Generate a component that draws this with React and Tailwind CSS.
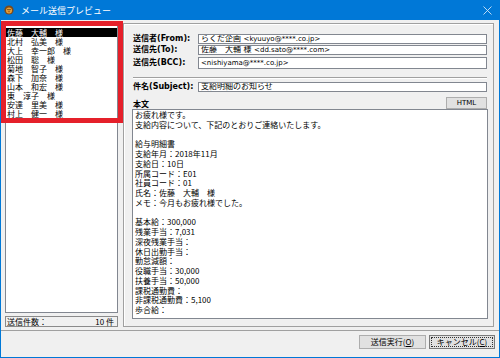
import React from "react";

const names = [
  "佐藤　大輔　様",
  "北村　弘美　様",
  "大上　幸一郎　様",
  "松田　聡　様",
  "菊地　智子　様",
  "森下　加奈　様",
  "山本　和宏　様",
  "東　淳子　様",
  "安達　里美　様",
  "村上　健一　様",
];

const body = [
  "お疲れ様です。",
  "支給内容について、下記のとおりご連絡いたします。",
  "",
  "給与明細書",
  "支給年月：2018年11月",
  "支給日：10日",
  "所属コード：E01",
  "社員コード：01",
  "氏名：佐藤　大輔　様",
  "メモ：今月もお疲れ様でした。",
  "",
  "基本給：300,000",
  "残業手当：7,031",
  "深夜残業手当：",
  "休日出勤手当：",
  "勤怠減額：",
  "役職手当：30,000",
  "扶養手当：50,000",
  "課税通勤費：",
  "非課税通勤費：5,100",
  "歩合給：",
];

function Field({ label, children, h, mt }) {
  return (
    <div className={`flex items-center ${h} ${mt}`}>
      <div className="w-[65px] shrink-0 text-[8px] font-bold leading-none whitespace-nowrap font-['DejaVu_Sans','Noto_Sans_CJK_JP',sans-serif]">
        {label}
      </div>
      <div className="flex-1 h-full border border-[#828790] bg-white flex items-center px-[2px] text-[8px] leading-none whitespace-nowrap overflow-hidden font-['DejaVu_Sans','Noto_Sans_CJK_JP',sans-serif]">
        {children}
      </div>
    </div>
  );
}

export default function App() {
  return (
    <div className="relative w-[500px] h-[358px] flex flex-col bg-[#0078d7] font-['Noto_Sans_CJK_JP',sans-serif] text-black">
      {/* title bar */}
      <div className="h-[20px] flex items-center text-white shrink-0">
        <svg className="ml-[4px]" width="10" height="10" viewBox="0 0 10 10">
          <circle cx="5" cy="5" r="4.6" fill="#7a4a1c" />
          <circle cx="5" cy="5.4" r="3" fill="#e8a23a" />
          <circle cx="4" cy="4.6" r="0.7" fill="#3a2008" />
          <circle cx="6" cy="4.6" r="0.7" fill="#3a2008" />
          <ellipse cx="5" cy="6.6" rx="1.3" ry="0.8" fill="#b86a20" />
        </svg>
        <span className="ml-[7px] text-[9px] leading-none">メール送信プレビュー</span>
        <svg className="ml-auto mr-[8px]" width="9" height="9" viewBox="0 0 9 9">
          <path d="M0.5 0.5 L8.5 8.5 M8.5 0.5 L0.5 8.5" stroke="#cfe4f7" strokeWidth="0.9" />
        </svg>
      </div>

      {/* body */}
      <div className="flex-1 mx-px mb-px bg-[#f0f0f0] flex flex-col">
        <div className="flex h-[310px] shrink-0">
          {/* left column */}
          <div className="w-[122px] shrink-0 pl-[4px] pt-[5px] flex flex-col">
            <div className="w-[113px] h-[288px] border border-[#828790] bg-white pt-[2px] px-0">
              {names.map((n, i) => (
                <div
                  key={i}
                  className={`h-[9px] leading-[9px] text-[8px] pl-[1px] whitespace-nowrap ${
                    i === 0 ? "bg-black text-white" : ""
                  }`}
                >
                  {n}
                </div>
              ))}
            </div>
            <div className="mt-[3px] w-[113px] h-[11px] border border-[#8a8a8a] bg-[#f0f0f0] flex items-center justify-between pl-[1px] pr-[3px] text-[8px] leading-none">
              <span>送信件数：</span>
              <span>10&nbsp;件</span>
            </div>
          </div>

          {/* right frame */}
          <div className="mt-[3px] w-[371px] h-[304px] border border-[#a0a0a0] shadow-[inset_1px_1px_0_#ffffff] flex flex-col pl-[9px] pr-[6px] pt-[10px]">
            <Field label="送信者(From):" h="h-[10px]" mt="">
              らくだ企画&nbsp;<span className="text-[7px]">&lt;kyuuyo@****.co.jp&gt;</span>
            </Field>
            <Field label="送信先(To):" h="h-[10px]" mt="mt-[1px]">
              佐藤　大輔 様&nbsp;<span className="text-[7px]">&lt;dd.sato@****.com&gt;</span>
            </Field>
            <Field label="送信先(BCC):" h="h-[12px]" mt="mt-[2px]">
              <span className="text-[7px]">&lt;nishiyama@****.co.jp&gt;</span>
            </Field>
            <div className="mt-[8px] h-[2px] border-t border-[#a0a0a0] border-b border-b-white" />
            <Field label="件名(Subject):" h="h-[10px]" mt="mt-[3px]">
              支給明細のお知らせ
            </Field>
            <div className="mt-[5px] h-[12px] flex items-end">
              <span className="text-[8px] font-bold leading-none pb-[1px]">本文</span>
              <div className="ml-auto w-[41px] h-[12px] border border-[#adadad] bg-[#e1e1e1] flex items-center justify-center text-[7px] leading-none font-['DejaVu_Sans',sans-serif]">
                HTML
              </div>
            </div>
            <div className="ml-[-1px] mr-[-1px] h-[210px] border border-[#828790] bg-white pl-[2px] pt-0 text-[8px] leading-[9.75px] overflow-hidden">
              {body.map((l, i) => (
                <div key={i} className="h-[9.75px] whitespace-nowrap">
                  {l}
                </div>
              ))}
            </div>
          </div>
        </div>

        <div className="h-px bg-[#a0a0a0] shrink-0" />

        {/* buttons */}
        <div className="flex-1 flex justify-end items-start pt-[4px] pr-[4px] gap-[3px]">
          <div className="w-[67px] h-[14px] border border-[#adadad] bg-[#e1e1e1] flex items-center justify-center text-[8px] leading-none">
            送信実行(<span className="underline">O</span>)
          </div>
          <div className="w-[66px] h-[14px] border border-[#7a7a7a] bg-[#e1e1e1] p-[1px]">
            <div className="w-full h-full border border-dotted border-[#333] flex items-center justify-center text-[8px] leading-none">
              キャンセル(<span className="underline">C</span>)
            </div>
          </div>
        </div>
      </div>

      {/* red highlight annotation */}
      <div className="absolute left-[1px] top-[21px] w-[122px] h-[102px] border-[5px] border-[#e5202a] pointer-events-none" />
    </div>
  );
}
